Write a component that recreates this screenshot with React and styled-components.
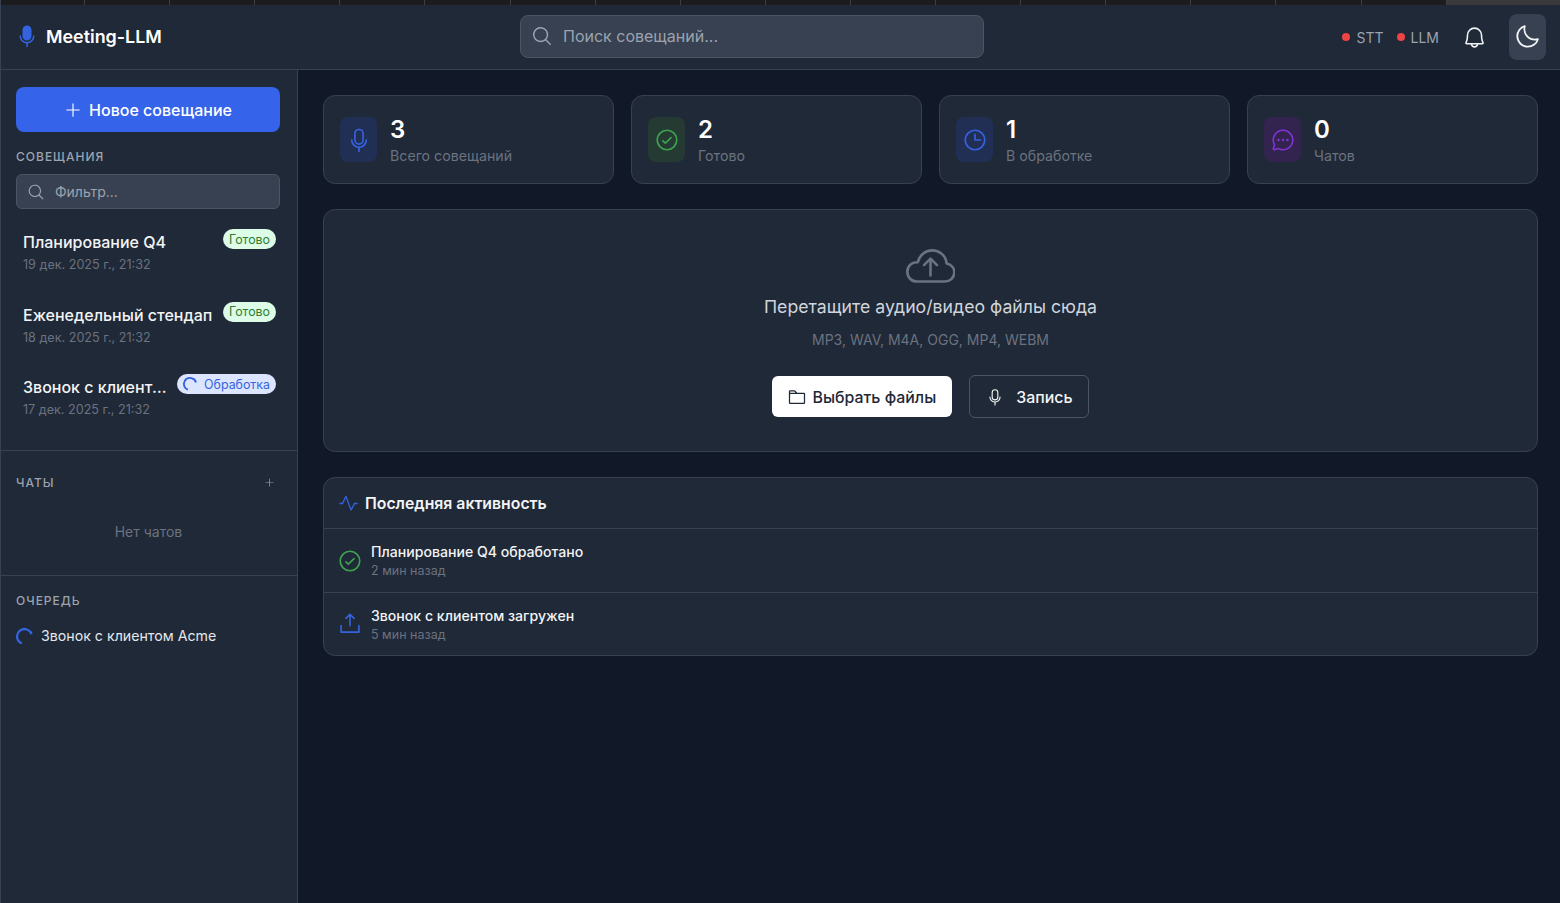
import styled, { createGlobalStyle } from 'styled-components';
import {
  PiBell,
  PiChatCircleDots,
  PiCheckCircle,
  PiClock,
  PiFolder,
  PiMagnifyingGlass,
  PiMicrophone,
  PiMicrophoneFill,
  PiMoon,
  PiPlus,
  PiPulse,
  PiUploadSimple,
} from 'react-icons/pi';

const TABS = Array.from({ length: 17 });

const STATS = [
  { value: '3', label: 'Всего совещаний', tone: 'blue', Icon: PiMicrophone },
  { value: '2', label: 'Готово', tone: 'green', Icon: PiCheckCircle },
  { value: '1', label: 'В обработке', tone: 'blue', Icon: PiClock },
  { value: '0', label: 'Чатов', tone: 'purple', Icon: PiChatCircleDots },
];

const MEETINGS = [
  { title: 'Планирование Q4', date: '19 дек. 2025 г., 21:32', done: true },
  { title: 'Еженедельный стендап', date: '18 дек. 2025 г., 21:32', done: true },
  { title: 'Звонок с клиентом Acme', date: '17 дек. 2025 г., 21:32', done: false },
];

const tones = {
  blue: { color: '#3563e0', bg: '#222f55' },
  green: { color: '#3fa350', bg: '#243a32' },
  purple: { color: '#8233d6', bg: '#33244f' },
};

function Spinner({ size }) {
  return (
    <SpinnerArc viewBox='0 0 16 16' $size={size}>
      <circle cx='8' cy='8' r='7' fill='none' stroke='#3563e0' strokeWidth='2.2' strokeDasharray='28 44' />
    </SpinnerArc>
  );
}

function CloudIcon() {
  return (
    <CloudSvg viewBox='0 0 49 34' fill='none' stroke='#6b7280' strokeWidth='2.6' strokeLinecap='round' strokeLinejoin='round'>
      <path d='M11 32.5C5.5 32.5 1.3 28.3 1.3 22.8 1.3 17.3 5.5 13.2 11 13.2h.8C13.4 6.2 19.2 1.4 26 1.4c7.9 0 14 5.6 14.6 13 4.6 1 7.7 4.5 7.7 8.9 0 5.1-4.1 9.2-9.3 9.2z' />
      <path d='M24.5 26.5V10M18 16.2l6.5-6.5 6.5 6.5' />
    </CloudSvg>
  );
}

export default function App() {
  return (
    <>
      <Global />
      <Page>
        <TabStrip>
          {TABS.map((_, i) => (
            <Tab key={i} />
          ))}
          <ActiveTab />
        </TabStrip>
        <Header>
          <Brand>
            <PiMicrophoneFill size={24} color='#3563e0' />
            <span>Meeting-LLM</span>
          </Brand>
          <TopSearch>
            <PiMagnifyingGlass size={22} />
            <span>Поиск совещаний...</span>
          </TopSearch>
          <HeaderRight>
            <Status>STT</Status>
            <Status>LLM</Status>
            <BellWrap>
              <PiBell size={25} />
            </BellWrap>
            <ThemeButton>
              <PiMoon size={28} />
            </ThemeButton>
          </HeaderRight>
        </Header>
        <Body>
          <Sidebar>
            <MeetingsSection>
              <NewButton>
                <PiPlus size={18} />
                Новое совещание
              </NewButton>
              <SectionTitle>Совещания</SectionTitle>
              <Filter>
                <PiMagnifyingGlass size={18} />
                <span>Фильтр...</span>
              </Filter>
              <MeetingList>
                {MEETINGS.map((m) => (
                  <Meeting key={m.title}>
                    <MeetingTop>
                      <MeetingTitle>{m.title}</MeetingTitle>
                      <Badge $done={m.done}>
                        {!m.done && <Spinner size={14} />}
                        {m.done ? 'Готово' : 'Обработка'}
                      </Badge>
                    </MeetingTop>
                    <MeetingDate>{m.date}</MeetingDate>
                  </Meeting>
                ))}
              </MeetingList>
            </MeetingsSection>
            <ChatsSection>
              <ChatsHead>
                <SectionTitle>Чаты</SectionTitle>
                <PiPlus size={11} />
              </ChatsHead>
              <Empty>Нет чатов</Empty>
            </ChatsSection>
            <QueueSection>
              <SectionTitle>Очередь</SectionTitle>
              <QueueItem>
                <Spinner size={17} />
                Звонок с клиентом Acme
              </QueueItem>
            </QueueSection>
          </Sidebar>
          <Main>
            <StatsGrid>
              {STATS.map(({ value, label, tone, Icon }) => (
                <StatCard key={label + value}>
                  <StatIcon $tone={tone}>
                    <Icon size={26} />
                  </StatIcon>
                  <StatText>
                    <StatValue>{value}</StatValue>
                    <StatLabel>{label}</StatLabel>
                  </StatText>
                </StatCard>
              ))}
            </StatsGrid>
            <DropZone>
              <CloudIcon />
              <DropTitle>Перетащите аудио/видео файлы сюда</DropTitle>
              <DropHint>MP3, WAV, M4A, OGG, MP4, WEBM</DropHint>
              <DropActions>
                <PickButton>
                  <PiFolder size={20} />
                  Выбрать файлы
                </PickButton>
                <RecordButton>
                  <PiMicrophone size={18} />
                  Запись
                </RecordButton>
              </DropActions>
            </DropZone>
            <Activity>
              <ActivityHead>
                <PiPulse size={21} color='#3563e0' />
                Последняя активность
              </ActivityHead>
              <ActivityRow>
                <PiCheckCircle size={26} color='#3fa350' />
                <div>
                  <ActivityTitle>Планирование Q4 обработано</ActivityTitle>
                  <ActivityTime>2 мин назад</ActivityTime>
                </div>
              </ActivityRow>
              <ActivityRow>
                <PiUploadSimple size={26} color='#3563e0' />
                <div>
                  <ActivityTitle>Звонок с клиентом загружен</ActivityTitle>
                  <ActivityTime>5 мин назад</ActivityTime>
                </div>
              </ActivityRow>
            </Activity>
          </Main>
        </Body>
      </Page>
    </>
  );
}

// -------------------------------------------------- styling ----------------------------------------------
const Global = createGlobalStyle`
  html, body {
    margin: 0;
    height: 100%;
    background: #111827;
  }

  * {
    box-sizing: border-box;
  }

  body {
    font-family: Inter, 'Liberation Sans', sans-serif;
    color: #f3f4f6;
  }
`;

const Page = styled.div`
  height: 903px;
  display: flex;
  flex-direction: column;
  overflow: hidden;
  border-left: 1px solid #374151;
`;

const TabStrip = styled.div`
  height: 5px;
  flex: none;
  margin-left: -1px;
  display: flex;
  background: #1c1c1e;
`;

const Tab = styled.div`
  width: 85.1px;
  border-right: 1px solid #3f3f41;
`;

const ActiveTab = styled.div`
  flex: 1;
  background: #3a3a3c;
`;

const Header = styled.header`
  height: 65px;
  flex: none;
  display: grid;
  grid-template-columns: 505px 464px 1fr;
  align-items: center;
  padding: 0 14px 0 14px;
  background: #1f2937;
  border-bottom: 1px solid #374151;
`;

const Brand = styled.div`
  display: flex;
  align-items: center;
  gap: 7px;
  padding-bottom: 2px;
  font-size: 17.9px;
  font-weight: 600;
  color: #ffffff;
`;

const TopSearch = styled.div`
  height: 43px;
  margin-bottom: 2px;
  display: flex;
  align-items: center;
  gap: 10px;
  padding: 0 10px;
  font-size: 16px;
  color: #9ca3af;
  background: #374151;
  border: 1px solid #4b5563;
  border-radius: 8px;
`;

const HeaderRight = styled.div`
  display: flex;
  align-items: center;
  justify-content: flex-end;
`;

const Status = styled.span`
  display: flex;
  align-items: center;
  gap: 6px;
  margin-right: 13px;
  font-size: 14px;
  color: #9ca3af;

  &::before {
    content: '';
    width: 8px;
    height: 8px;
    border-radius: 50%;
    background: #ef4444;
  }
`;

const BellWrap = styled.div`
  display: flex;
  margin: 0 22px 0 10px;
  color: #f3f4f6;
`;

const ThemeButton = styled.div`
  width: 37px;
  height: 46px;
  display: flex;
  align-items: center;
  justify-content: center;
  padding-right: 2px;
  color: #f3f4f6;
  background: #374151;
  border-radius: 8px;
`;

const Body = styled.div`
  flex: 1;
  display: flex;
  min-height: 0;
`;

const Sidebar = styled.aside`
  width: 297px;
  flex: none;
  background: #1f2937;
  border-right: 1px solid #374151;
`;

const MeetingsSection = styled.section`
  height: 381px;
  padding: 17px 17px 0 15px;
  border-bottom: 1px solid #374151;
`;

const NewButton = styled.div`
  height: 45px;
  display: flex;
  align-items: center;
  justify-content: center;
  gap: 7px;
  font-size: 16px;
  font-weight: 500;
  color: #ffffff;
  background: #3563e9;
  border-radius: 8px;
`;

const SectionTitle = styled.div`
  margin-top: 17px;
  font-size: 12px;
  font-weight: 500;
  line-height: 16px;
  letter-spacing: 1px;
  text-transform: uppercase;
  color: #9ca3af;
`;

const Filter = styled.div`
  height: 35px;
  margin-top: 9px;
  display: flex;
  align-items: center;
  gap: 10px;
  padding: 0 10px;
  font-size: 14px;
  color: #9ca3af;
  background: #374151;
  border: 1px solid #4b5563;
  border-radius: 6px;
`;

const MeetingList = styled.div`
  margin-top: 9px;
`;

const Meeting = styled.div`
  height: 72.5px;
  padding: 11px 4px 0 7px;
`;

const MeetingTop = styled.div`
  display: flex;
  align-items: flex-start;
  justify-content: space-between;
  gap: 10px;
`;

const MeetingTitle = styled.div`
  min-width: 0;
  padding-top: 3px;
  font-size: 16px;
  font-weight: 500;
  line-height: 20px;
  white-space: nowrap;
  overflow: hidden;
  text-overflow: ellipsis;
  color: #f3f4f6;
`;

const Badge = styled.span`
  flex: none;
  height: 20px;
  display: flex;
  align-items: center;
  gap: 7px;
  padding: 0 6px;
  font-size: 12.4px;
  color: ${({ $done }) => ($done ? '#2e7d32' : '#3563e0')};
  background: ${({ $done }) => ($done ? '#dcfce7' : '#dbe6fe')};
  border-radius: 10px;
`;

const SpinnerArc = styled.svg`
  flex: none;
  width: ${({ $size }) => $size}px;
  height: ${({ $size }) => $size}px;
  transform: rotate(110deg);
`;

const MeetingDate = styled.div`
  margin-top: 5px;
  font-size: 12.6px;
  line-height: 16px;
  color: #6b7280;
`;

const ChatsSection = styled.section`
  height: 125px;
  padding: 7px 16px 0 15px;
  border-bottom: 1px solid #374151;
`;

const ChatsHead = styled.div`
  display: flex;
  align-items: flex-end;
  justify-content: space-between;
  padding-right: 6px;
  color: #9ca3af;

  svg {
    margin-bottom: 3px;
  }
`;

const Empty = styled.div`
  margin-top: 31px;
  text-align: center;
  font-size: 14px;
  line-height: 20px;
  color: #6b7280;
`;

const QueueSection = styled.section`
  padding: 0 16px 0 15px;
`;

const QueueItem = styled.div`
  margin-top: 17px;
  display: flex;
  align-items: center;
  gap: 8px;
  font-size: 14.2px;
  line-height: 20px;
  color: #e5e7eb;
`;

const Main = styled.main`
  flex: 1;
  min-width: 0;
  padding: 25px 22px 0 25px;
`;

const StatsGrid = styled.div`
  display: grid;
  grid-template-columns: repeat(4, 1fr);
  gap: 17px;
`;

const StatCard = styled.div`
  height: 89px;
  display: flex;
  align-items: center;
  gap: 13px;
  padding: 0 16px;
  background: #1f2937;
  border: 1px solid #374151;
  border-radius: 12px;
`;

const StatIcon = styled.div`
  width: 37px;
  height: 45px;
  flex: none;
  display: flex;
  align-items: center;
  justify-content: center;
  color: ${({ $tone }) => tones[$tone].color};
  background: ${({ $tone }) => tones[$tone].bg};
  border-radius: 8px;
`;

const StatText = styled.div`
  padding-top: 2px;
`;

const StatValue = styled.div`
  font-size: 24px;
  font-weight: 600;
  line-height: 30px;
  color: #ffffff;
`;

const StatLabel = styled.div`
  margin-top: 1px;
  font-size: 14.2px;
  line-height: 20px;
  color: #6b7280;
`;

const DropZone = styled.div`
  height: 243px;
  margin-top: 25px;
  display: flex;
  flex-direction: column;
  align-items: center;
  padding-top: 39px;
  background: #1f2937;
  border: 1px solid #374151;
  border-radius: 12px;
`;

const CloudSvg = styled.svg`
  width: 49px;
  height: 34px;
  flex: none;
`;

const DropTitle = styled.div`
  margin-top: 12px;
  font-size: 17.7px;
  line-height: 24px;
  color: #d1d5db;
`;

const DropHint = styled.div`
  margin-top: 11px;
  font-size: 14px;
  line-height: 20px;
  color: #6b7280;
`;

const DropActions = styled.div`
  margin-top: 25px;
  display: flex;
  align-items: center;
  gap: 17px;
`;

const PickButton = styled.div`
  height: 41px;
  display: flex;
  align-items: center;
  gap: 6px;
  padding: 1px 16px 0 15px;
  font-size: 15.9px;
  font-weight: 500;
  color: #1f2937;
  background: #ffffff;
  border-radius: 6px;
`;

const RecordButton = styled.div`
  height: 43px;
  display: flex;
  align-items: center;
  gap: 12px;
  padding: 1px 16px 0;
  font-size: 15.9px;
  font-weight: 500;
  color: #f3f4f6;
  border: 1px solid #4b5563;
  border-radius: 6px;
`;

const Activity = styled.section`
  margin-top: 25px;
  background: #1f2937;
  border: 1px solid #374151;
  border-radius: 12px;
`;

const ActivityHead = styled.div`
  height: 51px;
  display: flex;
  align-items: center;
  gap: 6px;
  padding: 0 14px;
  font-size: 15.8px;
  font-weight: 600;
  color: #f3f4f6;
  border-bottom: 1px solid #374151;
`;

const ActivityRow = styled.div`
  height: 63px;
  display: flex;
  align-items: center;
  gap: 8px;
  padding: 0 13px;

  & + & {
    border-top: 1px solid #374151;
  }
`;

const ActivityTitle = styled.div`
  font-size: 14.1px;
  font-weight: 500;
  line-height: 20px;
  color: #f3f4f6;
`;

const ActivityTime = styled.div`
  margin-top: 1px;
  font-size: 12.5px;
  line-height: 16px;
  color: #6b7280;
`;
